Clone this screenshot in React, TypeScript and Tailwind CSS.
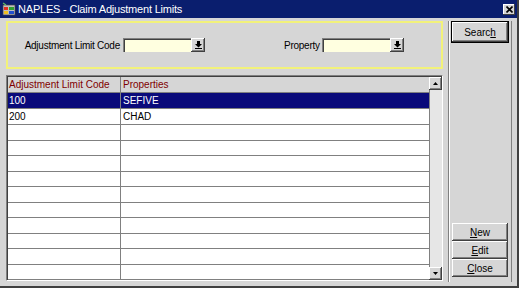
import React from 'react';

const raised =
  'shadow-[inset_-1px_-1px_#404040,inset_1px_1px_#ffffff,inset_-2px_-2px_#808080]';

function DropButton() {
  return (
    <div className={`w-[14px] h-[14px] bg-[#d6d6d6] flex items-center justify-center ${raised}`}>
      <svg width="7" height="8" viewBox="0 0 7 8">
        <path d="M2 0h3v3h2L3.5 6.5 0 3h2z" fill="#000" />
        <rect x="0" y="7" width="7" height="1" fill="#000" />
      </svg>
    </div>
  );
}

function Field({ label, width }: { label: string; width: string }) {
  return (
    <div className="flex items-center">
      <span className={`text-right pr-[3px] tracking-[-0.25px] ${width}`}>{label}</span>
      <div className="w-[68px] h-[14px] bg-[#ffffe0] border-t border-l border-[#808080] shadow-[inset_1px_1px_#404040]" />
      <DropButton />
    </div>
  );
}

function WinButton({ children, def }: { children: React.ReactNode; def?: boolean }) {
  return (
    <button
      className={`w-[56px] flex items-center justify-center bg-[#d6d6d6] text-black ${raised} ${
        def ? 'h-[20px] outline outline-1 outline-black' : 'h-[18px]'
      }`}
    >
      {children}
    </button>
  );
}

const rows = [
  { code: '100', prop: 'SEFIVE' },
  { code: '200', prop: 'CHAD' },
  ...Array.from({ length: 10 }, () => ({ code: '', prop: '' })),
];

export default function App() {
  return (
    <div
      className="w-[519px] h-[288px] bg-[#d6d6d6] flex flex-col border-r-2 border-b-2 border-[#404040] text-[10px] text-black overflow-hidden"
      style={{ fontFamily: '"Liberation Sans", Arial, sans-serif' }}
    >
      {/* title bar */}
      <div className="h-[18px] bg-[#0a1e6e] flex items-center pl-[2px] pr-[2px] shrink-0">
        <svg width="14" height="14" viewBox="0 0 14 14" className="shrink-0">
          <rect x="1" y="3" width="12" height="10" fill="#c0c0c0" stroke="#404040" strokeWidth="0.7" />
          <rect x="2" y="5" width="4" height="3" fill="#e03020" />
          <rect x="7" y="5" width="5" height="3" fill="#30a030" />
          <rect x="2" y="9" width="4" height="3" fill="#f0c020" />
          <rect x="7" y="9" width="5" height="3" fill="#2050d0" />
          <path d="M1 1l3 2" stroke="#60c060" strokeWidth="1.2" />
        </svg>
        <span className="text-white text-[11px] ml-[2px] tracking-[-0.2px]">NAPLES - Claim Adjustment Limits</span>
        <div className="ml-auto w-[12px] h-[11px] bg-[#d6d6d6] flex items-center justify-center shadow-[inset_-1px_-1px_#404040,inset_1px_1px_#ffffff]">
          <svg width="7" height="7" viewBox="0 0 7 7">
            <path d="M0.5 0.5l6 6M6.5 0.5l-6 6" stroke="#000" strokeWidth="1.6" />
          </svg>
        </div>
      </div>

      <div className="flex flex-1 pl-[6px] pt-[3px]">
        {/* left column */}
        <div className="w-[437px] flex flex-col">
          <div className="h-[48px] border-2 border-[#f2f27a] flex items-center">
            <Field label="Adjustment Limit Code" width="w-[115px]" />
            <div className="ml-[79px]">
              <Field label="Property" width="w-[38px]" />
            </div>
          </div>

          <div className="mt-[6px] h-[206px] flex border-t border-l border-[#808080] border-b border-b-white border-r border-r-white">
            <div className="flex-1 flex flex-col bg-white border-t border-l border-[#404040]">
              <div className="h-[16px] flex bg-[#d6d6d6] text-[#800000] border-b border-[#808080] shrink-0">
                <div className="w-[113px] pl-[1px] flex items-center border-r border-[#808080]">Adjustment Limit Code</div>
                <div className="flex-1 pl-[2px] flex items-center">Properties</div>
              </div>
              <div className="flex-1 flex flex-col">
                {rows.map((r, i) => (
                  <div
                    key={i}
                    className={`flex-1 flex border-b border-[#808080] ${i === 0 ? 'bg-[#0a0a7a] text-white' : ''}`}
                  >
                    <div className="w-[113px] pl-[1px] flex items-center border-r border-[#808080]">{r.code}</div>
                    <div className="flex-1 pl-[2px] flex items-center">{r.prop}</div>
                  </div>
                ))}
              </div>
            </div>
            {/* scrollbar */}
            <div className="w-[13px] flex flex-col bg-[#e6e6e6] border-t border-[#404040]">
              <div className={`h-[13px] bg-[#d6d6d6] flex items-center justify-center ${raised}`}>
                <svg width="5" height="3" viewBox="0 0 5 3">
                  <path d="M2.5 0L5 3H0z" fill="#000" />
                </svg>
              </div>
              <div className="flex-1 border-l border-[#808080]" />
              <div className={`h-[13px] bg-[#d6d6d6] flex items-center justify-center ${raised}`}>
                <svg width="5" height="3" viewBox="0 0 5 3">
                  <path d="M0 0h5L2.5 3z" fill="#000" />
                </svg>
              </div>
            </div>
          </div>
        </div>

        {/* right button panel */}
        <div className="ml-[5px] w-[64px] h-[261px] flex flex-col items-center border-l border-[#808080] shadow-[inset_1px_0_#ffffff] border-r border-r-[#808080] pt-[1px] pb-[5px]">
          <WinButton def>
            <span>
              Searc<u>h</u>
            </span>
          </WinButton>
          <div className="flex-1" />
          <WinButton>
            <span>
              <u>N</u>ew
            </span>
          </WinButton>
          <WinButton>
            <span>
              <u>E</u>dit
            </span>
          </WinButton>
          <WinButton>
            <span>
              <u>C</u>lose
            </span>
          </WinButton>
        </div>
      </div>
    </div>
  );
}
